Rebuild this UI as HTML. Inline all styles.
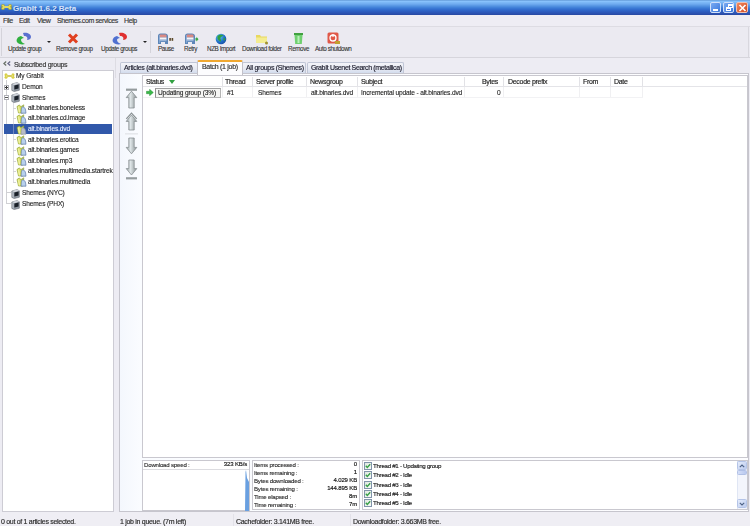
<!DOCTYPE html>
<html><head><meta charset="utf-8">
<style>
*{margin:0;padding:0;box-sizing:border-box}
html,body{width:750px;height:526px;overflow:hidden;background:#edecf3;font-family:"Liberation Sans",sans-serif;font-size:7px;color:#2a2a2a}
.abs{position:absolute}
.t{position:absolute;white-space:nowrap;line-height:8px;letter-spacing:-0.3px;-webkit-text-stroke-width:0.15px}
#title{left:0;top:0;width:750px;height:15px;background:linear-gradient(#5088c8 0px,#90c8ff 1px,#80bcf8 2px,#70acf0 4px,#5494e2 6px,#3c7cd6 8px,#3068ca 10px,#2c5abc 12px,#2a4eac 14px,#2848a0 15px)}
#menu{left:0;top:15px;width:750px;height:12px;background:#eeedf4}
#tb{left:0;top:26px;width:750px;height:32px;background:#ebeaf1;border-top:1px solid #dddce3;border-bottom:1px solid #d6d5dc}
.lbl{position:absolute;white-space:nowrap;font-size:6.3px;line-height:7px;color:#333;top:45px;letter-spacing:-0.4px;-webkit-text-stroke-width:0.1px}
.tab{position:absolute;top:62px;height:12px;background:linear-gradient(#f4f4f9,#e6e9f2 55%,#cdd8ec);border:1px solid #c0c6d6;border-bottom:none;border-radius:2px 2px 0 0}
.tab span{position:absolute;left:3px;top:1px;white-space:nowrap;line-height:8px;font-size:7px;letter-spacing:-0.3px;color:#202030;-webkit-text-stroke-width:0.15px}
.tr{position:absolute;white-space:nowrap;line-height:8px;letter-spacing:-0.15px;font-size:6.6px;color:#1a1a1a;-webkit-text-stroke-width:0.1px}
.hd{position:absolute;top:78px;white-space:nowrap;line-height:8px;letter-spacing:-0.3px;font-size:7px;color:#222;-webkit-text-stroke-width:0.15px}
.cs{position:absolute;top:77px;width:1px;height:9px;background:#e2e2e6}
.rs{position:absolute;top:87px;width:1px;height:10px;background:#f0f0f2}
.st{position:absolute;white-space:nowrap;line-height:7px;font-size:6.1px;letter-spacing:-0.2px;color:#2a2a2a;-webkit-text-stroke-width:0.12px}
.sv{position:absolute;white-space:nowrap;line-height:7px;font-size:6px;letter-spacing:-0.15px;color:#111;text-align:right;-webkit-text-stroke:0.15px #111}
.th{position:absolute;white-space:nowrap;line-height:8px;font-size:6.2px;letter-spacing:-0.3px;color:#222;left:373px;-webkit-text-stroke-width:0.15px}
.cb{position:absolute;left:364px;width:8px;height:8px;border:1px solid #8094aa;background:linear-gradient(135deg,#dfe8e0,#f8fbf8)}
#wrap{position:absolute;left:0;top:0;width:750px;height:526px;filter:blur(0.5px)}
</style></head><body><div id="wrap">
<!-- title bar -->
<div id="title" class="abs"></div>
<svg class="abs" style="left:1px;top:4px" width="11" height="6" viewBox="0 0 11 6"><rect x="2.5" y="2" width="6" height="2" fill="#c8c040"/><circle cx="2" cy="1.8" r="1.6" fill="#e0d850" stroke="#8a8020" stroke-width="0.4"/><circle cx="2" cy="4.2" r="1.6" fill="#e0d850" stroke="#8a8020" stroke-width="0.4"/><circle cx="9" cy="1.8" r="1.6" fill="#e0d850" stroke="#8a8020" stroke-width="0.4"/><circle cx="9" cy="4.2" r="1.6" fill="#e0d850" stroke="#8a8020" stroke-width="0.4"/><rect x="2" y="2.2" width="7" height="1.6" fill="#e8e070"/></svg>
<div class="t" style="left:13px;top:4px;color:#d4e2fa;font-weight:bold;font-size:8px;line-height:9px;letter-spacing:0;text-shadow:0.5px 0.5px 0 #2050b0">GrabIt 1.6.2 Beta</div>
<div class="abs" style="left:710px;top:2px;width:11px;height:11px;border:1px solid #d0e0fa;border-radius:2px;background:linear-gradient(135deg,#78aaf2,#3c78dc)"><div class="abs" style="left:2px;top:6px;width:5px;height:2px;background:#fff"></div></div>
<div class="abs" style="left:723px;top:2px;width:11px;height:11px;border:1px solid #d0e0fa;border-radius:2px;background:linear-gradient(135deg,#78aaf2,#3c78dc)"><div class="abs" style="left:4px;top:1px;width:5px;height:4px;border:1px solid #fff;border-top-width:2px"></div><div class="abs" style="left:2px;top:4px;width:5px;height:4px;border:1px solid #fff;border-top-width:2px;background:#4a7ee8"></div></div>
<div class="abs" style="left:736px;top:2px;width:12px;height:11px;border:1px solid #f0c0b0;border-radius:2px;background:linear-gradient(135deg,#f08a60,#d04820)">
<svg class="abs" style="left:1px;top:1px" width="9" height="8" viewBox="0 0 9 8"><path d="M1.5 1 L7.5 7 M7.5 1 L1.5 7" stroke="#fff" stroke-width="1.6"/></svg></div>

<!-- menu -->
<div id="menu" class="abs"></div>
<div class="t" style="left:3px;top:17px;letter-spacing:-0.4px;color:#383838">File</div>
<div class="t" style="left:19px;top:17px;letter-spacing:-0.4px;color:#383838">Edit</div>
<div class="t" style="left:37px;top:17px;letter-spacing:-0.4px;color:#383838">View</div>
<div class="t" style="left:57px;top:17px;letter-spacing:-0.4px;color:#383838">Shemes.com services</div>
<div class="t" style="left:124px;top:17px;letter-spacing:-0.4px;color:#383838">Help</div>

<!-- toolbar -->
<div id="tb" class="abs"></div>
<div class="abs" style="left:1px;top:28px;width:1px;height:28px;background:#d4d3da"></div>
<div class="abs" style="left:748px;top:27px;width:1px;height:30px;background:#d8d7de"></div>
<div class="abs" style="left:150px;top:31px;width:1px;height:22px;background:#d4d3da"></div>
<svg class="abs" style="left:15px;top:32px" width="18" height="13" viewBox="0 0 18 13">
<path d="M8 1 C12 0 16 2 16 5 C16 7 14 8 12 8 C13 6 12 4 9 4 Z" fill="#5a70d0"/>
<path d="M6 4 C2 5 1 8 2 10 C3 12 7 13 10 12 C8 11 6 10 6 8 C6 7 7 6 9 6 Z" fill="#30b040"/>
</svg>
<svg class="abs" style="left:67px;top:33px" width="12" height="11" viewBox="0 0 12 11">
<path d="M2 1.5 L10 9.5 M10 1.5 L2 9.5" stroke="#e04020" stroke-width="3"/>
</svg>
<svg class="abs" style="left:111px;top:32px" width="18" height="13" viewBox="0 0 18 13">
<path d="M8 1 C12 0 16 2 16 5 C16 7 14 8 12 8 C13 6 12 4 9 4 Z" fill="#e03030"/>
<path d="M6 4 C2 5 1 8 2 10 C3 12 7 13 10 12 C8 11 6 10 6 8 C6 7 7 6 9 6 Z" fill="#5070d0"/>
</svg>
<div class="abs" style="left:47px;top:41px;width:0;height:0;border-left:2px solid transparent;border-right:2px solid transparent;border-top:2px solid #222"></div>
<div class="abs" style="left:143px;top:41px;width:0;height:0;border-left:2px solid transparent;border-right:2px solid transparent;border-top:2px solid #222"></div>
<!-- pause / retry icons -->
<svg class="abs" style="left:157px;top:33px" width="18" height="12" viewBox="0 0 18 12"><path d="M1 3 C1 1.5 2 0.5 3.5 0.5 L8 0.5 C9.5 0.5 11 1.5 11 3 L11 11 L8 11 L8 9 L4 9 L4 11 L1 11Z" fill="#5d86b8"/><path d="M2.5 2.6 C2.5 1.8 3 1.5 3.8 1.5 L8.2 1.5 C9 1.5 9.5 1.8 9.5 2.6 L9.5 4.5 L2.5 4.5Z" fill="#d98a84"/><rect x="2.5" y="4.5" width="7" height="2.2" fill="#f6f4f6"/><rect x="2.5" y="6.7" width="7" height="1.5" fill="#98b4d8"/><rect x="2" y="2" width="1" height="8" fill="#8eb0dc" opacity="0.7"/><rect x="12.3" y="5" width="1.6" height="2.8" fill="#5a4828"/><rect x="14.6" y="5" width="1.6" height="2.8" fill="#5a4828"/></svg>
<svg class="abs" style="left:184px;top:33px" width="18" height="12" viewBox="0 0 18 12"><path d="M1 3 C1 1.5 2 0.5 3.5 0.5 L8 0.5 C9.5 0.5 11 1.5 11 3 L11 11 L8 11 L8 9 L4 9 L4 11 L1 11Z" fill="#5d86b8"/><path d="M2.5 2.6 C2.5 1.8 3 1.5 3.8 1.5 L8.2 1.5 C9 1.5 9.5 1.8 9.5 2.6 L9.5 4.5 L2.5 4.5Z" fill="#d98a84"/><rect x="2.5" y="4.5" width="7" height="2.2" fill="#f6f4f6"/><rect x="2.5" y="6.7" width="7" height="1.5" fill="#98b4d8"/><rect x="2" y="2" width="1" height="8" fill="#8eb0dc" opacity="0.7"/><path d="M11.5 5 L12.5 5 L12.5 3.8 L14.5 6.3 L12.5 8.6 L12.5 7.4 L11.5 7.4Z" fill="#3aa84a"/></svg>
<svg class="abs" style="left:215px;top:33px" width="12" height="12" viewBox="0 0 12 12"><defs><radialGradient id="gl" cx="0.35" cy="0.3" r="0.8"><stop offset="0" stop-color="#60c8f0"/><stop offset="0.6" stop-color="#2070c8"/><stop offset="1" stop-color="#1848a0"/></radialGradient></defs><circle cx="6" cy="6" r="5.3" fill="url(#gl)"/><path d="M2.5 3 C4 1.5 7 1.2 8.5 2.5 C7.5 3.5 6 3.2 5.5 4.8 C5 6.3 6.5 7 6 8.5 C4.5 8.5 3 7 2.5 5.5Z" fill="#30a040"/><path d="M8.5 5 C9.5 4.5 10.5 5.5 10.2 7 C9.5 8 8.8 7.5 8.5 6.5Z" fill="#30a040"/></svg>
<svg class="abs" style="left:255px;top:33px" width="14" height="12" viewBox="0 0 14 12">
<path d="M1 2 L5 2 L6 3.5 L12 3.5 L12 10 L1 10Z" fill="#e8d860"/><path d="M1 4.5 L12 4.5 L12 10 L1 10Z" fill="#f4ec90"/><circle cx="11.5" cy="10" r="1.5" fill="#a09030"/>
</svg>
<svg class="abs" style="left:293px;top:32px" width="11" height="13" viewBox="0 0 11 13">
<rect x="1" y="1" width="9" height="2" fill="#40a040"/><path d="M1.5 3 L9.5 3 L8.8 12 L2.2 12Z" fill="#70d070"/><rect x="4.5" y="4" width="2" height="7" fill="#b8f0b8"/>
</svg>
<svg class="abs" style="left:327px;top:32px" width="13" height="13" viewBox="0 0 13 13">
<rect x="0.5" y="0.5" width="11" height="11" rx="1.5" fill="#e05848"/><circle cx="6" cy="6" r="3" fill="none" stroke="#fff" stroke-width="1.3"/><rect x="5.4" y="2" width="1.2" height="3" fill="#fff"/><rect x="8" y="9" width="5" height="3" fill="#c0a030"/>
</svg>
<div class="lbl" style="left:8px">Update group</div>
<div class="lbl" style="left:56px">Remove group</div>
<div class="lbl" style="left:101px">Update groups</div>
<div class="lbl" style="left:158px">Pause</div>
<div class="lbl" style="left:184px">Retry</div>
<div class="lbl" style="left:207px">NZB Import</div>
<div class="lbl" style="left:242px">Download folder</div>
<div class="lbl" style="left:288px">Remove</div>
<div class="lbl" style="left:315px">Auto shutdown</div>

<!-- left panel -->
<svg class="abs" style="left:3px;top:61px" width="9" height="5" viewBox="0 0 9 5"><path d="M3.2 0.6 L1 2.5 L3.2 4.4" fill="none" stroke="#687068" stroke-width="1.3"/><path d="M7.2 0.6 L5 2.5 L7.2 4.4" fill="none" stroke="#686888" stroke-width="1.3"/></svg>
<div class="t" style="left:14px;top:61px;color:#333">Subscribed groups</div>
<div class="abs" style="left:2px;top:70px;width:112px;height:442px;background:#fff;border:1px solid #cdccd4"></div>
<!-- tree lines -->
<div class="abs" style="left:6px;top:80px;width:1px;height:124px;background:#d0d0d4"></div>
<div class="abs" style="left:13px;top:102px;width:1px;height:81px;background:#dcdce2"></div>
<div class="abs" style="left:6px;top:192px;width:5px;height:1px;background:#d0d0d4"></div>
<div class="abs" style="left:6px;top:203px;width:5px;height:1px;background:#d0d0d4"></div>
<div class="abs" style="left:13px;top:108px;width:3px;height:1px;background:#d4d4d8"></div>
<div class="abs" style="left:13px;top:118px;width:3px;height:1px;background:#d4d4d8"></div>
<div class="abs" style="left:13px;top:129px;width:3px;height:1px;background:#d4d4d8"></div>
<div class="abs" style="left:13px;top:139px;width:3px;height:1px;background:#d4d4d8"></div>
<div class="abs" style="left:13px;top:150px;width:3px;height:1px;background:#d4d4d8"></div>
<div class="abs" style="left:13px;top:161px;width:3px;height:1px;background:#d4d4d8"></div>
<div class="abs" style="left:13px;top:171px;width:3px;height:1px;background:#d4d4d8"></div>
<div class="abs" style="left:13px;top:182px;width:3px;height:1px;background:#d4d4d8"></div>
<!-- selection -->
<div class="abs" style="left:4px;top:124px;width:108px;height:10px;background:#3158aa"></div>
<div class="abs" style="left:13px;top:124px;width:1px;height:10px;background:#7088c0"></div>
<!-- tree icons & text -->
<svg class="abs" style="left:4px;top:73px" width="11" height="6" viewBox="0 0 11 6"><rect x="2.5" y="2" width="6" height="2" fill="#b8b030"/><circle cx="2" cy="1.7" r="1.5" fill="#d8d048"/><circle cx="2" cy="4.3" r="1.5" fill="#d8d048"/><circle cx="9" cy="1.7" r="1.5" fill="#d8d048"/><circle cx="9" cy="4.3" r="1.5" fill="#d8d048"/><rect x="2" y="2.5" width="7" height="1" fill="#f0e890"/></svg>
<div class="tr" style="left:16px;top:72px">My GrabIt</div>
<div class="abs" style="left:4px;top:85px;width:5px;height:5px;border:1px solid #b0b0b8;background:#fff"></div>
<div class="abs" style="left:5px;top:87px;width:3px;height:1px;background:#333"></div>
<div class="abs" style="left:6px;top:86px;width:1px;height:3px;background:#333"></div>
<svg class="abs" style="left:11px;top:82px" width="9" height="10" viewBox="0 0 9 10"><path d="M0.8 2 L6 0.6 L8.4 1.8 L8.4 8.2 L3.2 9.6 L0.8 8.4Z" fill="#8e96a0" stroke="#5a6068" stroke-width="0.5"/><path d="M0.8 2 L6 0.6 L8.4 1.8 L3.2 3.2Z" fill="#d0d4da"/><path d="M3.4 3.6 L7.6 2.6 L7.6 6.4 L3.4 7.4Z" fill="#1a2028"/><path d="M1.3 2.8 L2.8 3.4 L2.8 8.8 L1.3 8.1Z" fill="#b4bac2"/></svg>
<div class="tr" style="left:22px;top:83px">Demon</div>
<div class="abs" style="left:4px;top:95px;width:5px;height:5px;border:1px solid #b0b0b8;background:#fff"></div>
<div class="abs" style="left:5px;top:97px;width:3px;height:1px;background:#555"></div>
<svg class="abs" style="left:11px;top:93px" width="9" height="10" viewBox="0 0 9 10"><path d="M0.8 2 L6 0.6 L8.4 1.8 L8.4 8.2 L3.2 9.6 L0.8 8.4Z" fill="#8e96a0" stroke="#5a6068" stroke-width="0.5"/><path d="M0.8 2 L6 0.6 L8.4 1.8 L3.2 3.2Z" fill="#d0d4da"/><path d="M3.4 3.6 L7.6 2.6 L7.6 6.4 L3.4 7.4Z" fill="#1a2028"/><path d="M1.3 2.8 L2.8 3.4 L2.8 8.8 L1.3 8.1Z" fill="#b4bac2"/></svg>
<div class="tr" style="left:22px;top:94px">Shemes</div>
<svg class="abs" style="left:16px;top:104px" width="11" height="10" viewBox="0 0 11 10"><path d="M1 2.5 L3.2 1 L5 2.6 L7.8 0.8 L7 9 L2.5 9Z" fill="#d4dc58" stroke="#8a9a30" stroke-width="0.6"/><path d="M1.8 3 L3.2 2 L4.4 8.4 L2.8 8.4Z" fill="#eef0a0"/><path d="M6.5 2.8 C7.8 2.8 9.3 4 9.6 6 L10 9.2 L5 9.2 L5.3 5.5 C5.5 4 5.8 2.8 6.5 2.8Z" fill="#b8d0ec" stroke="#4e6a98" stroke-width="0.6"/></svg>
<div class="tr" style="left:28px;top:104px">alt.binaries.boneless</div>
<svg class="abs" style="left:16px;top:114px" width="11" height="10" viewBox="0 0 11 10"><path d="M1 2.5 L3.2 1 L5 2.6 L7.8 0.8 L7 9 L2.5 9Z" fill="#d4dc58" stroke="#8a9a30" stroke-width="0.6"/><path d="M1.8 3 L3.2 2 L4.4 8.4 L2.8 8.4Z" fill="#eef0a0"/><path d="M6.5 2.8 C7.8 2.8 9.3 4 9.6 6 L10 9.2 L5 9.2 L5.3 5.5 C5.5 4 5.8 2.8 6.5 2.8Z" fill="#b8d0ec" stroke="#4e6a98" stroke-width="0.6"/></svg>
<div class="tr" style="left:28px;top:114px">alt.binaries.cd.image</div>
<svg class="abs" style="left:16px;top:125px" width="11" height="10" viewBox="0 0 11 10"><path d="M1 2.5 L3.2 1 L5 2.6 L7.8 0.8 L7 9 L2.5 9Z" fill="#d4dc58" stroke="#8a9a30" stroke-width="0.6"/><path d="M1.8 3 L3.2 2 L4.4 8.4 L2.8 8.4Z" fill="#eef0a0"/><path d="M6.5 2.8 C7.8 2.8 9.3 4 9.6 6 L10 9.2 L5 9.2 L5.3 5.5 C5.5 4 5.8 2.8 6.5 2.8Z" fill="#b8bcc8" stroke="#8890a0" stroke-width="0.6"/></svg>
<div class="tr" style="left:28px;top:125px;color:#e8eeff">alt.binaries.dvd</div>
<svg class="abs" style="left:16px;top:135px" width="11" height="10" viewBox="0 0 11 10"><path d="M1 2.5 L3.2 1 L5 2.6 L7.8 0.8 L7 9 L2.5 9Z" fill="#d4dc58" stroke="#8a9a30" stroke-width="0.6"/><path d="M1.8 3 L3.2 2 L4.4 8.4 L2.8 8.4Z" fill="#eef0a0"/><path d="M6.5 2.8 C7.8 2.8 9.3 4 9.6 6 L10 9.2 L5 9.2 L5.3 5.5 C5.5 4 5.8 2.8 6.5 2.8Z" fill="#b8d0ec" stroke="#4e6a98" stroke-width="0.6"/></svg>
<div class="tr" style="left:28px;top:136px">alt.binaries.erotica</div>
<svg class="abs" style="left:16px;top:146px" width="11" height="10" viewBox="0 0 11 10"><path d="M1 2.5 L3.2 1 L5 2.6 L7.8 0.8 L7 9 L2.5 9Z" fill="#d4dc58" stroke="#8a9a30" stroke-width="0.6"/><path d="M1.8 3 L3.2 2 L4.4 8.4 L2.8 8.4Z" fill="#eef0a0"/><path d="M6.5 2.8 C7.8 2.8 9.3 4 9.6 6 L10 9.2 L5 9.2 L5.3 5.5 C5.5 4 5.8 2.8 6.5 2.8Z" fill="#b8d0ec" stroke="#4e6a98" stroke-width="0.6"/></svg>
<div class="tr" style="left:28px;top:146px">alt.binaries.games</div>
<svg class="abs" style="left:16px;top:156px" width="11" height="10" viewBox="0 0 11 10"><path d="M1 2.5 L3.2 1 L5 2.6 L7.8 0.8 L7 9 L2.5 9Z" fill="#d4dc58" stroke="#8a9a30" stroke-width="0.6"/><path d="M1.8 3 L3.2 2 L4.4 8.4 L2.8 8.4Z" fill="#eef0a0"/><path d="M6.5 2.8 C7.8 2.8 9.3 4 9.6 6 L10 9.2 L5 9.2 L5.3 5.5 C5.5 4 5.8 2.8 6.5 2.8Z" fill="#b8d0ec" stroke="#4e6a98" stroke-width="0.6"/></svg>
<div class="tr" style="left:28px;top:157px">alt.binaries.mp3</div>
<svg class="abs" style="left:16px;top:167px" width="11" height="10" viewBox="0 0 11 10"><path d="M1 2.5 L3.2 1 L5 2.6 L7.8 0.8 L7 9 L2.5 9Z" fill="#d4dc58" stroke="#8a9a30" stroke-width="0.6"/><path d="M1.8 3 L3.2 2 L4.4 8.4 L2.8 8.4Z" fill="#eef0a0"/><path d="M6.5 2.8 C7.8 2.8 9.3 4 9.6 6 L10 9.2 L5 9.2 L5.3 5.5 C5.5 4 5.8 2.8 6.5 2.8Z" fill="#b8d0ec" stroke="#4e6a98" stroke-width="0.6"/></svg>
<div class="tr" style="left:28px;top:167px">alt.binaries.multimedia.startrek</div>
<svg class="abs" style="left:16px;top:177px" width="11" height="10" viewBox="0 0 11 10"><path d="M1 2.5 L3.2 1 L5 2.6 L7.8 0.8 L7 9 L2.5 9Z" fill="#d4dc58" stroke="#8a9a30" stroke-width="0.6"/><path d="M1.8 3 L3.2 2 L4.4 8.4 L2.8 8.4Z" fill="#eef0a0"/><path d="M6.5 2.8 C7.8 2.8 9.3 4 9.6 6 L10 9.2 L5 9.2 L5.3 5.5 C5.5 4 5.8 2.8 6.5 2.8Z" fill="#b8d0ec" stroke="#4e6a98" stroke-width="0.6"/></svg>
<div class="tr" style="left:28px;top:178px">alt.binaries.multimedia</div>
<svg class="abs" style="left:11px;top:189px" width="9" height="10" viewBox="0 0 9 10"><path d="M0.8 2 L6 0.6 L8.4 1.8 L8.4 8.2 L3.2 9.6 L0.8 8.4Z" fill="#8e96a0" stroke="#5a6068" stroke-width="0.5"/><path d="M0.8 2 L6 0.6 L8.4 1.8 L3.2 3.2Z" fill="#d0d4da"/><path d="M3.4 3.6 L7.6 2.6 L7.6 6.4 L3.4 7.4Z" fill="#1a2028"/><path d="M1.3 2.8 L2.8 3.4 L2.8 8.8 L1.3 8.1Z" fill="#b4bac2"/></svg>
<div class="tr" style="left:22px;top:189px">Shemes (NYC)</div>
<svg class="abs" style="left:11px;top:200px" width="9" height="10" viewBox="0 0 9 10"><path d="M0.8 2 L6 0.6 L8.4 1.8 L8.4 8.2 L3.2 9.6 L0.8 8.4Z" fill="#8e96a0" stroke="#5a6068" stroke-width="0.5"/><path d="M0.8 2 L6 0.6 L8.4 1.8 L3.2 3.2Z" fill="#d0d4da"/><path d="M3.4 3.6 L7.6 2.6 L7.6 6.4 L3.4 7.4Z" fill="#1a2028"/><path d="M1.3 2.8 L2.8 3.4 L2.8 8.8 L1.3 8.1Z" fill="#b4bac2"/></svg>
<div class="tr" style="left:22px;top:200px">Shemes (PHX)</div>

<!-- splitter line -->
<div class="abs" style="left:115px;top:58px;width:1px;height:20px;background:#dddce3"></div>

<!-- tabs -->
<div class="tab" style="left:120px;width:78px"><span>Articles (alt.binaries.dvd)</span></div>
<div class="tab" style="left:242px;width:64px"><span>All groups (Shemes)</span></div>
<div class="tab" style="left:307px;width:97px"><span style="letter-spacing:-0.35px">GrabIt Usenet Search (metallica)</span></div>

<!-- right panel -->
<div class="abs" style="left:119px;top:73px;width:630px;height:439px;background:linear-gradient(90deg,#f4f7fd,#fafcff 20px,#fdfdff);border:1px solid #c6c5cd"></div>
<div class="abs" style="left:197px;top:60px;width:46px;height:15px;background:#fcfcfe;border:1px solid #c2c1c9;border-bottom:none;border-top:2px solid #f0a830;border-radius:2px 2px 0 0"><span class="t" style="left:4px;top:1px;color:#303030">Batch (1 job)</span></div>
<div class="abs" style="left:142px;top:75px;width:606px;height:383px;background:#fff;border:1px solid #c9c8cf"></div>

<!-- arrow column -->
<svg class="abs" style="left:125px;top:88px" width="13" height="94" viewBox="0 0 13 94">
<defs><linearGradient id="ag" x1="0" x2="1"><stop offset="0" stop-color="#9aa2a4"/><stop offset="0.4" stop-color="#dfe6e8"/><stop offset="0.7" stop-color="#b4bcbe"/><stop offset="1" stop-color="#8c9496"/></linearGradient></defs>
<rect x="1" y="0.6" width="11" height="2.2" fill="#959c9e"/>
<path d="M6.5 3.2 L11.8 9.6 L9.2 9.6 L9.2 20 L3.8 20 L3.8 9.6 L1.2 9.6Z" fill="url(#ag)" stroke="#7c8486" stroke-width="0.7"/>
<path d="M6.5 27 L11.8 33.4 L9.2 33.4 L9.2 42 L3.8 42 L3.8 33.4 L1.2 33.4Z" fill="url(#ag)" stroke="#7c8486" stroke-width="0.7"/>
<path d="M6.5 24.2 L12.2 30.6 L11.2 31.2 L6.5 26 L1.8 31.2 L0.8 30.6Z" fill="#8a9294"/>
<rect x="0" y="45.5" width="14" height="0.8" fill="#d4d6da"/>
<path d="M3.8 50 L9.2 50 L9.2 59.4 L11.8 59.4 L6.5 65.8 L1.2 59.4 L3.8 59.4Z" fill="url(#ag)" stroke="#7c8486" stroke-width="0.7"/>
<path d="M3.8 72 L9.2 72 L9.2 80.6 L11.8 80.6 L6.5 87 L1.2 80.6 L3.8 80.6Z" fill="url(#ag)" stroke="#7c8486" stroke-width="0.7"/>
<rect x="1" y="89.2" width="11" height="2.2" fill="#959c9e"/>
</svg>

<!-- list header -->
<div class="abs" style="left:143px;top:86px;width:604px;height:1px;background:#e4e4e8"></div>
<div class="hd" style="left:146px">Status</div>
<div class="abs" style="left:169px;top:80px;width:0;height:0;border-left:3.5px solid transparent;border-right:3.5px solid transparent;border-top:4px solid #30a040"></div>
<div class="cs" style="left:222px"></div>
<div class="hd" style="left:225px">Thread</div>
<div class="cs" style="left:252px"></div>
<div class="hd" style="left:256px">Server profile</div>
<div class="cs" style="left:306px"></div>
<div class="hd" style="left:310px">Newsgroup</div>
<div class="cs" style="left:357px"></div>
<div class="hd" style="left:361px">Subject</div>
<div class="cs" style="left:464px"></div>
<div class="hd" style="left:482px">Bytes</div>
<div class="cs" style="left:503px"></div>
<div class="hd" style="left:508px">Decode prefix</div>
<div class="cs" style="left:579px"></div>
<div class="hd" style="left:583px">From</div>
<div class="cs" style="left:610px"></div>
<div class="hd" style="left:614px">Date</div>
<div class="cs" style="left:642px"></div>
<!-- row -->
<div class="abs" style="left:143px;top:97px;width:500px;height:1px;background:#f2f2f4"></div>
<div class="rs" style="left:222px"></div><div class="rs" style="left:252px"></div><div class="rs" style="left:306px"></div><div class="rs" style="left:357px"></div><div class="rs" style="left:464px"></div><div class="rs" style="left:503px"></div><div class="rs" style="left:579px"></div><div class="rs" style="left:610px"></div><div class="rs" style="left:642px"></div>
<svg class="abs" style="left:146px;top:89px" width="8" height="7" viewBox="0 0 8 7"><path d="M0.5 2.3 L3.6 2.3 L3.6 0.3 L7.3 3.5 L3.6 6.7 L3.6 4.7 L0.5 4.7Z" fill="#38b848" stroke="#2a9038" stroke-width="0.5" stroke-linejoin="round"/></svg>
<div class="abs" style="left:155px;top:88px;width:66px;height:10px;border:1px solid #b4b4b4;border-left-color:#909090;border-top-color:#a0a0a0;background:#f6f6f4"></div>
<div class="tr" style="left:158px;top:89px">Updating group (3%)</div>
<div class="tr" style="left:227px;top:89px">#1</div>
<div class="tr" style="left:258px;top:89px">Shemes</div>
<div class="tr" style="left:311px;top:89px">alt.binaries.dvd</div>
<div class="tr" style="left:361px;top:89px">Incremental update - alt.binaries.dvd</div>
<div class="tr" style="left:497px;top:89px">0</div>

<!-- bottom: download speed -->
<div class="abs" style="left:142px;top:460px;width:108px;height:51px;background:#fff;border:1px solid #c9c8cf"></div>
<div class="abs" style="left:143px;top:469px;width:106px;height:1px;background:#dcdce0"></div>
<div class="st" style="left:144px;top:461px">Download speed :</div>
<div class="sv" style="left:200px;top:461px;width:47px">323 KB/s</div>
<svg class="abs" style="left:243px;top:470px" width="7" height="41" viewBox="0 0 7 41"><path d="M2 41 L2.5 2 L3 0 L4 8 L6 12 L6 41Z" fill="#6aa0e0"/></svg>

<!-- stats -->
<div class="abs" style="left:252px;top:460px;width:108px;height:50px;background:#fff;border:1px solid #c9c8cf"></div>
<div class="st" style="left:254px;top:461px">Items processed :</div><div class="sv" style="left:310px;top:461px;width:47px">0</div>
<div class="st" style="left:254px;top:469px">Items remaining :</div><div class="sv" style="left:310px;top:469px;width:47px">1</div>
<div class="st" style="left:254px;top:477px">Bytes downloaded :</div><div class="sv" style="left:300px;top:477px;width:57px">4.029 KB</div>
<div class="st" style="left:254px;top:485px">Bytes remaining :</div><div class="sv" style="left:300px;top:485px;width:57px">144.895 KB</div>
<div class="st" style="left:254px;top:493px">Time elapsed :</div><div class="sv" style="left:310px;top:493px;width:47px">8m</div>
<div class="st" style="left:254px;top:501px">Time remaining :</div><div class="sv" style="left:310px;top:501px;width:47px">7m</div>

<!-- threads -->
<div class="abs" style="left:362px;top:460px;width:386px;height:50px;background:#fff;border:1px solid #c9c8cf"></div>
<div class="cb" style="top:462px"><svg class="abs" style="left:0;top:0" width="6" height="6" viewBox="0 0 6 6"><path d="M0.8 2.8 L2.3 4.4 L5.2 1.2" fill="none" stroke="#38a048" stroke-width="1.4"/></svg></div><div class="th" style="top:462px">Thread #1 - Updating group</div>
<div class="cb" style="top:471px"><svg class="abs" style="left:0;top:0" width="6" height="6" viewBox="0 0 6 6"><path d="M0.8 2.8 L2.3 4.4 L5.2 1.2" fill="none" stroke="#38a048" stroke-width="1.4"/></svg></div><div class="th" style="top:471px">Thread #2 - Idle</div>
<div class="cb" style="top:481px"><svg class="abs" style="left:0;top:0" width="6" height="6" viewBox="0 0 6 6"><path d="M0.8 2.8 L2.3 4.4 L5.2 1.2" fill="none" stroke="#38a048" stroke-width="1.4"/></svg></div><div class="th" style="top:481px">Thread #3 - Idle</div>
<div class="cb" style="top:490px"><svg class="abs" style="left:0;top:0" width="6" height="6" viewBox="0 0 6 6"><path d="M0.8 2.8 L2.3 4.4 L5.2 1.2" fill="none" stroke="#38a048" stroke-width="1.4"/></svg></div><div class="th" style="top:490px">Thread #4 - Idle</div>
<div class="cb" style="top:499px"><svg class="abs" style="left:0;top:0" width="6" height="6" viewBox="0 0 6 6"><path d="M0.8 2.8 L2.3 4.4 L5.2 1.2" fill="none" stroke="#38a048" stroke-width="1.4"/></svg></div><div class="th" style="top:499px">Thread #5 - Idle</div>
<!-- scrollbar -->
<div class="abs" style="left:737px;top:461px;width:10px;height:48px;background:#f3f5fc;border-left:1px solid #e0e6f4"></div>
<div class="abs" style="left:737px;top:461px;width:10px;height:9px;background:linear-gradient(135deg,#e4ecfc,#bccbee);border:1px solid #b4c4e8;border-radius:1.5px"><svg class="abs" style="left:1px;top:1.5px" width="6" height="4" viewBox="0 0 6 4"><path d="M0.8 3.2 L3 1 L5.2 3.2" fill="none" stroke="#4d6185" stroke-width="1.1"/></svg></div>
<div class="abs" style="left:737px;top:470px;width:10px;height:5px;background:linear-gradient(90deg,#d4def8,#b8c8ee);border:1px solid #b0c0e6;border-radius:1.5px"></div>
<div class="abs" style="left:737px;top:499px;width:10px;height:9px;background:linear-gradient(135deg,#e4ecfc,#bccbee);border:1px solid #b4c4e8;border-radius:1.5px"><svg class="abs" style="left:1px;top:2px" width="6" height="4" viewBox="0 0 6 4"><path d="M0.8 0.8 L3 3 L5.2 0.8" fill="none" stroke="#4d6185" stroke-width="1.1"/></svg></div>

<!-- status bar -->
<div class="abs" style="left:0;top:512px;width:750px;height:14px;background:#efeef4"></div>

<div class="abs" style="left:233px;top:514px;width:1px;height:12px;background:#e2e1e8"></div>
<div class="abs" style="left:350px;top:514px;width:1px;height:12px;background:#e2e1e8"></div>
<div class="t" style="left:1px;top:518px">0 out of 1 articles selected.</div>
<div class="t" style="left:120px;top:518px">1 job in queue. (7m left)</div>
<div class="t" style="left:236px;top:518px">Cachefolder: 3.141MB free.</div>
<div class="t" style="left:353px;top:518px">Downloadfolder: 3.663MB free.</div>
</div></body></html>
